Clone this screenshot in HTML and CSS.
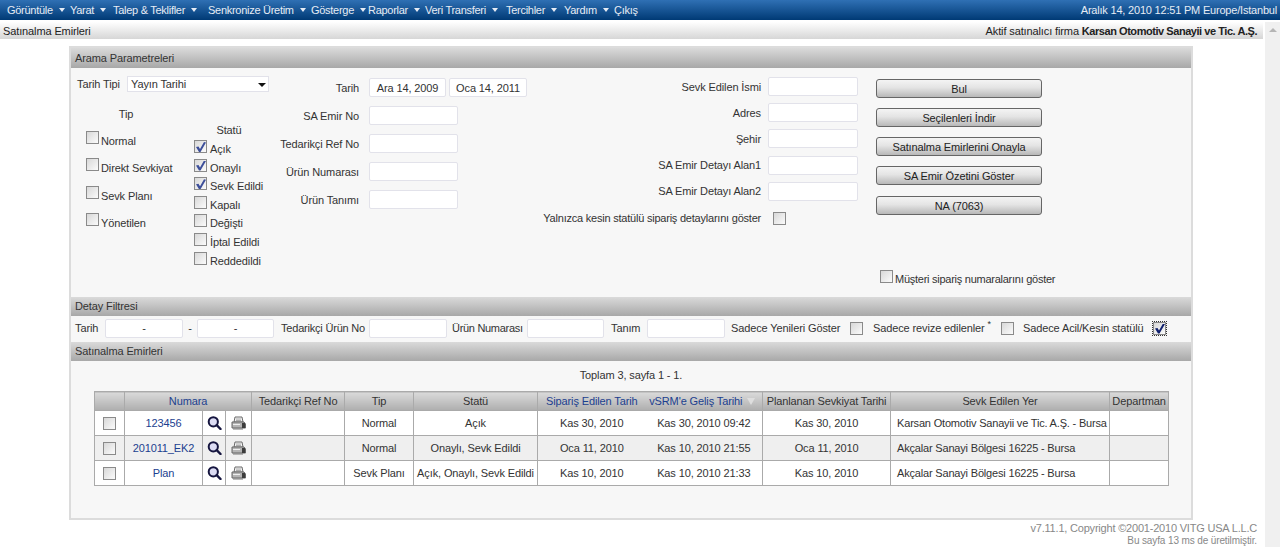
FILE: index.html
```html
<!DOCTYPE html>
<html lang="tr">
<head>
  <meta charset="UTF-8">
  <title>Satınalma Emirleri</title>
  <link rel="stylesheet" href="styles.css">
</head>
<body>

<svg class="defs" width="0" height="0">
  <symbol id="icon-search" viewBox="0 0 14 14">
    <circle cx="5.8" cy="5.8" r="4.6" fill="#dcdcf4" stroke="#15153f" stroke-width="2"/>
    <path d="M9.2 9.2 L13 13" stroke="#15153f" stroke-width="2.4" stroke-linecap="round"/>
  </symbol>
  <symbol id="icon-print" viewBox="0 0 15 14">
    <path d="M4 1 H11 L12 6 H3 Z" fill="#f2f2f2" stroke="#6a6a6a"/>
    <path d="M5 3 H10 M5 4.5 H10" stroke="#999" stroke-width="0.8"/>
    <path d="M1 6 H13 L14.5 8 V12 H1 Z" fill="#b4b4b4" stroke="#666"/>
    <path d="M11 7 H14 V12 H11 Z" fill="#3c3c3c"/>
    <path d="M2 12.5 H12 V13.5 H2 Z" fill="#777"/>
    <path d="M2 8.5 H9" stroke="#eee"/>
  </symbol>
</svg>

<!-- Top menu -->
<div class="topbar">
  <nav class="menu">
    <a class="m1">Görüntüle<i class="tri"></i></a>
    <a class="m2">Yarat<i class="tri"></i></a>
    <a class="m3">Talep &amp; Teklifler<i class="tri"></i></a>
    <a class="m4">Senkronize Üretim<i class="tri"></i></a>
    <a class="m5">Gösterge<i class="tri"></i></a>
    <a class="m6">Raporlar<i class="tri"></i></a>
    <a class="m7">Veri Transferi<i class="tri"></i></a>
    <a class="m8">Tercihler<i class="tri"></i></a>
    <a class="m9">Yardım<i class="tri"></i></a>
    <a>Çıkış</a>
  </nav>
  <div class="clock">Aralık 14, 2010 12:51 PM Europe/Istanbul</div>
</div>

<div class="page">
  <div class="main">
    <div class="subbar">
      <span>Satınalma Emirleri</span>
      <span>Aktif satınalıcı firma <b>Karsan Otomotiv Sanayii ve Tic. A.Ş.</b></span>
    </div>

    <div class="panel">
      <div class="head">Arama Parametreleri</div>
      <div class="search">

        <div class="col-a">
          <div class="type-row">
            <label>Tarih Tipi</label>
            <span class="select-wrap">
              <select class="select"><option>Yayın Tarihi</option></select>
            </span>
          </div>
          <div class="checks">
            <div class="tip-col">
              <div class="col-title">Tip</div>
              <label class="chk"><input type="checkbox">Normal</label>
              <label class="chk"><input type="checkbox">Direkt Sevkiyat</label>
              <label class="chk"><input type="checkbox">Sevk Planı</label>
              <label class="chk"><input type="checkbox">Yönetilen</label>
            </div>
            <div class="status-col">
              <div class="col-title">Statü</div>
              <label class="chk"><input type="checkbox" checked>Açık</label>
              <label class="chk"><input type="checkbox" checked>Onaylı</label>
              <label class="chk"><input type="checkbox" checked>Sevk Edildi</label>
              <label class="chk"><input type="checkbox">Kapalı</label>
              <label class="chk"><input type="checkbox">Değişti</label>
              <label class="chk"><input type="checkbox">İptal Edildi</label>
              <label class="chk"><input type="checkbox">Reddedildi</label>
            </div>
          </div>
        </div>

        <div class="col-b">
          <div class="field">
            <label>Tarih</label>
            <div class="dates">
              <input class="text date" type="text" value="Ara 14, 2009">
              <input class="text date" type="text" value="Oca 14, 2011">
            </div>
          </div>
          <div class="field"><label>SA Emir No</label><input class="text" type="text"></div>
          <div class="field"><label>Tedarikçi Ref No</label><input class="text" type="text"></div>
          <div class="field"><label>Ürün Numarası</label><input class="text" type="text"></div>
          <div class="field"><label>Ürün Tanımı</label><input class="text" type="text"></div>
        </div>

        <div class="col-c">
          <div class="field"><label>Sevk Edilen İsmi</label><input class="text" type="text"></div>
          <div class="field"><label>Adres</label><input class="text" type="text"></div>
          <div class="field"><label>Şehir</label><input class="text" type="text"></div>
          <div class="field"><label>SA Emir Detayı Alan1</label><input class="text" type="text"></div>
          <div class="field"><label>SA Emir Detayı Alan2</label><input class="text" type="text"></div>
          <div class="field firm-only"><label>Yalnızca kesin statülü sipariş detaylarını göster</label><input type="checkbox"></div>
        </div>

        <div class="col-d">
          <button class="btn">Bul</button>
          <button class="btn">Seçilenleri İndir</button>
          <button class="btn">Satınalma Emirlerini Onayla</button>
          <button class="btn">SA Emir Özetini Göster</button>
          <button class="btn btn-last">NA (7063)</button>
          <label class="chk customer"><input type="checkbox">Müşteri sipariş numaralarını göster</label>
        </div>
      </div>

      <div class="head head-sm">Detay Filtresi</div>
      <div class="filter">
        <label class="f1">Tarih</label>
        <input class="text f-wide" type="text" value="-">
        <span class="dash">-</span>
        <input class="text f-date" type="text" value="-">
        <label class="f2">Tedarikçi Ürün No</label>
        <input class="text f-wide" type="text">
        <label class="f3">Ürün Numarası</label>
        <input class="text f-date" type="text">
        <label class="f4">Tanım</label>
        <input class="text f-wide" type="text">
        <label class="f5">Sadece Yenileri Göster</label>
        <input class="f-chk" type="checkbox">
        <label class="f6">Sadece revize edilenler <sup>*</sup></label>
        <input class="f-chk" type="checkbox">
        <label class="f7">Sadece Acil/Kesin statülü</label>
        <input class="f-chk focus" type="checkbox" checked>
      </div>

      <div class="head head-sm">Satınalma Emirleri</div>
      <div class="results">
        <div class="total">Toplam 3, sayfa 1 - 1.</div>
        <table class="grid">
          <colgroup>
            <col class="c-check"><col class="c-num"><col class="c-icon1"><col class="c-icon2">
            <col class="c-ref"><col class="c-tip"><col class="c-status"><col class="c-order">
            <col class="c-arrive"><col class="c-plan"><col class="c-place"><col class="c-dept">
          </colgroup>
          <thead>
            <tr>
              <th></th>
              <th colspan="3"><a>Numara</a></th>
              <th>Tedarikçi Ref No</th>
              <th>Tip</th>
              <th>Statü</th>
              <th class="no-right"><a>Sipariş Edilen Tarih</a></th>
              <th class="no-left sorted"><a>vSRM'e Geliş Tarihi</a><i class="sort"></i></th>
              <th>Planlanan Sevkiyat Tarihi</th>
              <th>Sevk Edilen Yer</th>
              <th>Departman</th>
            </tr>
          </thead>
          <tbody>
            <tr>
              <td><input type="checkbox"></td>
              <td><a>123456</a></td>
              <td><svg class="ico"><use href="#icon-search"/></svg></td>
              <td><svg class="ico"><use href="#icon-print"/></svg></td>
              <td></td>
              <td>Normal</td>
              <td>Açık</td>
              <td class="no-right">Kas 30, 2010</td>
              <td class="no-left">Kas 30, 2010 09:42</td>
              <td>Kas 30, 2010</td>
              <td class="place">Karsan Otomotiv Sanayii ve Tic. A.Ş. - Bursa</td>
              <td></td>
            </tr>
            <tr class="alt">
              <td><input type="checkbox"></td>
              <td><a>201011_EK2</a></td>
              <td><svg class="ico"><use href="#icon-search"/></svg></td>
              <td><svg class="ico"><use href="#icon-print"/></svg></td>
              <td></td>
              <td>Normal</td>
              <td>Onaylı, Sevk Edildi</td>
              <td class="no-right">Oca 11, 2010</td>
              <td class="no-left">Kas 10, 2010 21:55</td>
              <td>Oca 11, 2010</td>
              <td class="place">Akçalar Sanayi Bölgesi 16225 - Bursa</td>
              <td></td>
            </tr>
            <tr>
              <td><input type="checkbox"></td>
              <td><a>Plan</a></td>
              <td><svg class="ico"><use href="#icon-search"/></svg></td>
              <td><svg class="ico"><use href="#icon-print"/></svg></td>
              <td></td>
              <td>Sevk Planı</td>
              <td>Açık, Onaylı, Sevk Edildi</td>
              <td class="no-right">Kas 10, 2010</td>
              <td class="no-left">Kas 10, 2010 21:33</td>
              <td>Kas 10, 2010</td>
              <td class="place">Akçalar Sanayi Bölgesi 16225 - Bursa</td>
              <td></td>
            </tr>
          </tbody>
        </table>
      </div>
    </div>

    <div class="footer">
      <div>v7.11.1, Copyright ©2001-2010 VITG USA L.L.C</div>
      <div class="footer-small">Bu sayfa 13 ms de üretilmiştir.</div>
    </div>
  </div>

  <!-- Scrollbar -->
  <div class="scrollbar"><i class="up"></i></div>
</div>

</body>
</html>
```

FILE: styles.css
```css
* { box-sizing: border-box; }

html, body {
  margin: 0;
  padding: 0;
  height: 547px;
  overflow: hidden;
  background: #fff;
  color: #333;
  font-family: "Liberation Sans", Arial, sans-serif;
  font-size: 11px;
  letter-spacing: -0.12px;
  white-space: nowrap;
}

.defs { position: absolute; }

a { color: #1c3f8f; }

/* Top menu */
.topbar {
  display: flex;
  justify-content: space-between;
  align-items: center;
  height: 20px;
  padding: 0 3px 0 7px;
  background: linear-gradient(#2f70b4, #003a75);
  color: #e6ecf5;
}

.menu { display: flex; }

.menu a {
  display: flex;
  align-items: center;
  color: #e6ecf5;
  letter-spacing: -0.28px;
}

.tri {
  width: 0;
  height: 0;
  margin-left: 6px;
  border-left: 3.5px solid transparent;
  border-right: 3.5px solid transparent;
  border-top: 4px solid #e6ecf5;
}

.m1 { width: 63px; }
.m2 { width: 43px; }
.m3 { width: 95px; }
.m4 { width: 103px; }
.m5 { width: 57px; }
.m6 { width: 57px; }
.m7 { width: 81px; }
.m8 { width: 58px; }
.m9 { width: 50px; }

.clock { letter-spacing: -0.2px; }

.page {
  display: flex;
  height: 525px;
  margin-top: 2px;
}

.main { width: 1263px; }

.scrollbar {
  position: relative;
  width: 17px;
  background: #f0f0f0;
  border-left: 2px solid #fff;
}

.up {
  position: absolute;
  top: 6px;
  left: 4px;
  border-left: 4px solid transparent;
  border-right: 4px solid transparent;
  border-bottom: 4px solid #b5b5b5;
}

.subbar {
  display: flex;
  justify-content: space-between;
  align-items: center;
  height: 17px;
  padding: 0 6px 0 3px;
  background: linear-gradient(#fff, #d6d6d6);
  color: #222;
}

.subbar b { letter-spacing: -0.45px; }

/* Panel */
.panel {
  width: 1124px;
  height: 474px;
  margin: 7px 0 0 69px;
  background: #f7f7f7;
  border: 2px solid #dcdcdc;
}

.head {
  height: 20px;
  padding-left: 4px;
  line-height: 21px;
  background: linear-gradient(#dadada, #a8a8a8);
  color: #333;
}

.head-sm {
  height: 19px;
  line-height: 19px;
}

.search {
  display: flex;
  height: 229px;
}

.text {
  height: 19px;
  padding: 0;
  background: #fff;
  border: 1px solid #e2e2ea;
  border-radius: 2px;
  color: #333;
  font: inherit;
  letter-spacing: inherit;
  text-align: center;
}

input[type=checkbox] {
  appearance: none;
  flex: none;
  position: relative;
  width: 13px;
  height: 13px;
  margin: 0;
  background: linear-gradient(135deg, #d8d8d8, #fbfbfb);
  border: 1px solid #8a8a8a;
}

input[type=checkbox]:checked::after {
  content: "";
  position: absolute;
  top: 1px;
  left: 1px;
  width: 10px;
  height: 10px;
  background: #3d4f9a;
  clip-path: polygon(0 50%, 25% 45%, 40% 70%, 80% 0, 100% 5%, 45% 100%, 30% 100%);
}

/* Search columns */
.col-a {
  width: 209px;
  padding: 8px 0 0 6px;
}

.type-row {
  display: flex;
  align-items: flex-start;
}

.type-row label {
  width: 50px;
  line-height: 16px;
}

.select-wrap {
  position: relative;
  display: block;
}

.select-wrap::after {
  content: "";
  position: absolute;
  top: 7px;
  right: 3px;
  border-left: 4px solid transparent;
  border-right: 4px solid transparent;
  border-top: 4px solid #111;
}

.select {
  display: block;
  appearance: none;
  width: 142px;
  height: 16px;
  padding: 0 0 0 3px;
  background: #fff;
  border: 1px solid #e2e2ea;
  color: #333;
  font: inherit;
  letter-spacing: inherit;
}

.checks { display: flex; }

.col-title { text-align: center; }

/* text sits 3px lower than its box, as in the original form */
.chk {
  display: flex;
  align-items: flex-end;
  gap: 2px;
  height: 16px;
  line-height: 13px;
}

.chk input[type=checkbox] { align-self: flex-start; }

.tip-col {
  width: 117px;
  padding: 16px 0 0 9px;
}

.tip-col .col-title {
  width: 80px;
  height: 23px;
  line-height: 13px;
}

.tip-col .chk {
  height: 17px;
  margin-bottom: 10.3px;
}

.status-col { padding-top: 34px; }

.status-col .col-title {
  width: 70px;
  height: 14px;
  line-height: 8px;
}

.status-col .chk {
  gap: 3px;
  margin-bottom: 2.6px;
}

.col-b {
  display: flex;
  flex-direction: column;
  gap: 9px;
  width: 250px;
  padding-top: 10px;
}

.field {
  display: flex;
  align-items: center;
  height: 19px;
}

.field label {
  flex: none;
  text-align: right;
}

.col-b .field label {
  width: 79px;
  margin-right: 10px;
}

.col-b .text { width: 89px; }

.dates {
  display: flex;
  gap: 3px;
}

.col-b .date { width: 77px; }
.col-b .date:last-child { width: 78px; }

.col-c {
  display: flex;
  flex-direction: column;
  gap: 7.2px;
  width: 346px;
  padding-top: 9px;
}

.col-c .field label {
  width: 231px;
  margin-right: 7px;
}

.col-c .text { width: 90px; }

.firm-only { margin-top: 1px; }

.firm-only label { letter-spacing: -0.22px; }

.firm-only input[type=checkbox] { margin-left: 5px; }

.col-d {
  display: flex;
  flex-direction: column;
  align-items: flex-start;
  gap: 10px;
  width: 185px;
  padding: 11px 0;
}

.btn {
  width: 166px;
  height: 19px;
  padding: 0;
  background: linear-gradient(#f4f4f4, #e4e4e4 45%, #b8b8b8);
  border: 1px solid #666;
  border-radius: 3px;
  color: #222;
  font: inherit;
  letter-spacing: inherit;
}

.btn-last { margin-top: 1px; }

.customer {
  margin: auto 0 0 4px;
  letter-spacing: -0.26px;
}

/* Detail filter */
.filter {
  display: flex;
  align-items: center;
  height: 26px;
  padding: 0 0 2px 4px;
}

.filter label { flex: none; }

.f-date { width: 77px; }
.f-wide { width: 78px; }

.dash {
  width: 14px;
  text-align: center;
}

.f1 { width: 30px; }
.f2 { width: 88px; margin-left: 7px; letter-spacing: -0.2px; }
.f3 { width: 75px; margin-left: 5px; letter-spacing: -0.3px; }
.f4 { width: 36px; margin-left: 7px; }
.f5 { width: 119px; margin-left: 6px; }
.f6 { width: 128px; margin-left: 10px; }
.f7 { width: 130px; margin-left: 9px; }

.f6 sup {
  font-size: 9px;
  line-height: 0;
}

.focus {
  outline: 1px dotted #333;
  outline-offset: 0;
}

.focus:checked::after { background: #10206e !important; }

/* Results */
.results {
  padding: 7px 0 0 23px;
}

.total {
  height: 23px;
  padding-right: 23px;
  line-height: 15px;
  text-align: center;
}

.grid {
  width: 1075px;
  table-layout: fixed;
  border-collapse: collapse;
  background: #fff;
}

.grid th, .grid td {
  padding: 0;
  border: 1px solid #aaa;
  text-align: center;
}

.grid th {
  height: 19px;
  background: linear-gradient(#dadada, #aeaeae);
  font-weight: normal;
}

.grid th.sorted { padding-right: 3px; }

.grid td { height: 25px; }

.grid .alt td { background: #efefef; }

.grid .no-right { border-right: 0; }
.grid .no-left { border-left: 0; }

.grid td.place {
  padding-left: 6px;
  letter-spacing: -0.18px;
  text-align: left;
}

.grid input[type=checkbox] { vertical-align: middle; }

.c-check { width: 30px; }
.c-num { width: 78px; }
.c-icon1 { width: 23px; }
.c-icon2 { width: 26px; }
.c-ref { width: 93px; }
.c-tip { width: 69px; }
.c-status { width: 124px; }
.c-order { width: 108px; }
.c-arrive { width: 117px; }
.c-plan { width: 128px; }
.c-place { width: 219px; }
.c-dept { width: 59px; }

.ico {
  display: block;
  width: 15px;
  height: 14px;
  margin: 0 auto;
}

.sort {
  display: inline-block;
  margin-left: 5px;
  border-left: 4px solid transparent;
  border-right: 4px solid transparent;
  border-top: 7px solid #dedede;
}

/* Footer */
.footer {
  padding: 2px 6px 0 0;
  color: #888;
  text-align: right;
  letter-spacing: -0.2px;
}

.footer-small {
  margin-top: 1px;
  font-size: 10px;
  letter-spacing: -0.12px;
}
```
